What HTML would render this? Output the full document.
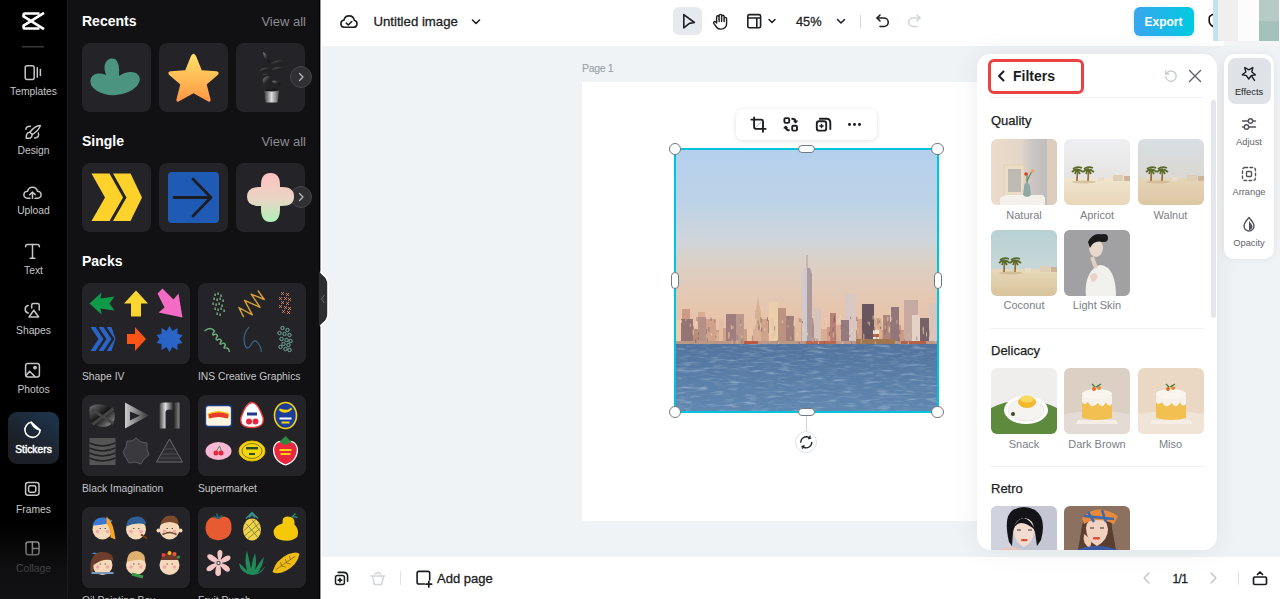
<!DOCTYPE html>
<html><head><meta charset="utf-8">
<style>
*{box-sizing:border-box;margin:0;padding:0}
html,body{width:1280px;height:599px;overflow:hidden;font-family:"Liberation Sans",sans-serif;background:#eff2f5;position:relative}
.abs{position:absolute}
.t{position:absolute;white-space:nowrap}
.card{position:absolute;width:69px;height:69px;background:#242428;border-radius:8px}
.pk{position:absolute;width:108px;height:81px;background:#242428;border-radius:8px}
.ft{position:absolute;width:66px;height:66px;border-radius:6px;overflow:hidden}
.ft svg{display:block}
.arr{position:absolute;width:22px;height:22px;border-radius:50%;background:#2f2f34;border:1px solid #45454a}
</style></head><body>
<div class="abs" style="left:0;top:0;width:67px;height:599px;background:#000"></div>
<svg class="abs" style="left:0;top:0" width="67" height="50" viewBox="0 0 67 50"><g fill="none" stroke="#fff" stroke-width="2.7" stroke-linejoin="round" stroke-linecap="butt">
<path d="M44 12.9 L23.6 25.6 V27 Q23.6 28.5 25.1 28.5 H39.5"/>
<path d="M44 29.1 L23.6 16.4 V15 Q23.6 13.5 25.1 13.5 H39.5"/>
</g><rect x="22" y="46" width="22" height="1.5" fill="#3a3a3c"/></svg>
<div class="t" style="left:0.0px;width:67px;text-align:center;top:87px;font-size:10.3px;line-height:10.3px;color:#c6c6ca;font-weight:normal;">Templates</div>
<div class="t" style="left:0.0px;width:67px;text-align:center;top:146px;font-size:10.3px;line-height:10.3px;color:#c6c6ca;font-weight:normal;">Design</div>
<div class="t" style="left:0.0px;width:67px;text-align:center;top:206px;font-size:10.3px;line-height:10.3px;color:#c6c6ca;font-weight:normal;">Upload</div>
<div class="t" style="left:0.0px;width:67px;text-align:center;top:266px;font-size:10.3px;line-height:10.3px;color:#c6c6ca;font-weight:normal;">Text</div>
<div class="t" style="left:0.0px;width:67px;text-align:center;top:326px;font-size:10.3px;line-height:10.3px;color:#c6c6ca;font-weight:normal;">Shapes</div>
<div class="t" style="left:0.0px;width:67px;text-align:center;top:385px;font-size:10.3px;line-height:10.3px;color:#c6c6ca;font-weight:normal;">Photos</div>
<div class="abs" style="left:8px;top:412px;width:51px;height:52px;border-radius:9px;background:linear-gradient(35deg,#1c1f25 30%,#1d3650 100%)"></div>
<div class="t" style="left:0.0px;width:67px;text-align:center;top:445px;font-size:10.3px;line-height:10.3px;color:#fff;font-weight:normal;-webkit-text-stroke:0.45px #fff">Stickers</div>
<div class="t" style="left:0.0px;width:67px;text-align:center;top:505px;font-size:10.3px;line-height:10.3px;color:#c6c6ca;font-weight:normal;">Frames</div>
<div class="t" style="left:0.0px;width:67px;text-align:center;top:564px;font-size:10.3px;line-height:10.3px;color:#c6c6ca;font-weight:normal;">Collage</div>
<svg class="abs" style="left:0;top:0" width="67" height="599" viewBox="0 0 67 599" fill="none" stroke="#c6c6ca" stroke-width="1.5" stroke-linecap="round" stroke-linejoin="round">
<rect x="25.2" y="65.7" width="9" height="13.8" rx="2"/><path d="M37.3 67.8v9.5M40.4 69.5v6"/>
<path d="M40.3 125.6 Q34.5 126 30 132.3 L32.2 134.6 Q39 130.2 40.3 125.6Z"/><path d="M30 132.3 Q27.5 132.2 26.6 134.5 Q26.2 136.6 26.3 138.2 Q28.5 138.6 30.3 138 Q32.2 137 32.2 134.6"/><path d="M25.9 129.3 Q25.6 126.5 30.5 126.2"/><path d="M38.3 133 Q39.8 137.6 34.6 138"/>
<path d="M30 198.2 H27.2 A3.5 3.5 0 0 1 27.6 191.2 A5 5 0 0 1 37.4 191.2 A3.5 3.5 0 0 1 37.8 198.2 H35"/><path d="M32.5 198.3v-6M29.7 194.8l2.8-2.8 2.8 2.8"/>
<path d="M25.6 246.8 Q25.6 244.6 27.6 244.6 H37.4 Q39.4 244.6 39.4 246.8"/><path d="M32.5 244.6V258.3M30.2 258.3h4.6"/>
<path d="M28.2 305.4 A3.9 3.9 0 0 0 28.2 313"/><path d="M31.7 308 V305 Q31.7 303.4 33.3 303.4 H37.6 Q39.2 303.4 39.2 305 V310"/><path d="M33.8 310.2 L38.6 317 H29 Z"/>
<rect x="25.6" y="363.6" width="13.8" height="13.4" rx="2.2"/><circle cx="35" cy="367.6" r="1.2" fill="#c6c6ca"/><path d="M26.3 375.3 L29.6 371.2 L35 376.6"/>
<g stroke="#fff" stroke-width="1.6"><path d="M31.3 422.3 A7.6 7.6 0 1 0 40.1 430.2"/><path d="M31.3 422.3 Q33 428 40.1 430.2 Z"/></g>
<rect x="25.6" y="482.6" width="13.4" height="12.6" rx="2.4"/><rect x="28.6" y="485.8" width="7.2" height="6.4" rx="1.6"/>
<g><rect x="26" y="542" width="13" height="12.8" rx="2.2"/><path d="M32.4 542v12.8M32.4 548.4h6.6"/></g>
</svg>
<div class="abs" style="left:0;top:520px;width:67px;height:79px;background:linear-gradient(rgba(19,19,21,0) 0px,rgba(19,19,21,.4) 28px,rgba(19,19,21,.75) 47px,rgba(19,19,21,.96) 79px)"></div>
<div class="abs" style="left:67px;top:0;width:253px;height:599px;background:#111113"></div>
<div class="abs" style="left:67px;top:0;width:1px;height:599px;background:#1c1c1f"></div>
<div class="t" style="left:82px;top:14px;font-size:14px;line-height:14px;color:#fff;font-weight:bold;">Recents</div>
<div class="t" style="right:974px;top:15px;font-size:13px;line-height:13px;color:#8c8c91;font-weight:normal;">View all</div>
<div class="t" style="left:82px;top:134px;font-size:14px;line-height:14px;color:#fff;font-weight:bold;">Single</div>
<div class="t" style="right:974px;top:135px;font-size:13px;line-height:13px;color:#8c8c91;font-weight:normal;">View all</div>
<div class="t" style="left:82px;top:254px;font-size:14px;line-height:14px;color:#fff;font-weight:bold;">Packs</div>
<div class="card" style="left:82px;top:43px"></div>
<div class="card" style="left:159px;top:43px"></div>
<div class="card" style="left:236px;top:43px"></div>
<div class="card" style="left:82px;top:163px"></div>
<div class="card" style="left:159px;top:163px"></div>
<div class="card" style="left:236px;top:163px"></div>
<svg class="abs" style="left:82px;top:43px" width="69" height="69" viewBox="0 0 69 69">
<path d="M15 48 Q6 42 9 35 Q13 28 24 32 Q21 24 24 19 Q27 14 33 16 Q38 19 37 33 Q46 27 54 30 Q61 35 55 43 Q47 51 34 52 Q24 53 15 48Z" fill="#4a9480"/></svg>
<svg class="abs" style="left:159px;top:43px" width="69" height="69" viewBox="0 0 69 69"><defs><linearGradient id="sg" x1="0" y1="0" x2="0" y2="1"><stop offset="0" stop-color="#ffe36a"/><stop offset="1" stop-color="#ff9644"/></linearGradient></defs>
<g transform="translate(34.5,36) scale(1.1) translate(-34.5,-33)"><path d="M34.5 10 Q36 10 37 12.5 L42 25 L55.5 26 Q58 26.5 57 29 L46.5 38 L50 51.5 Q50.5 54.5 48 53.5 L34.5 46 L21 53.5 Q18.5 54.5 19 51.5 L22.5 38 L12 29 Q11 26.5 13.5 26 L27 25 L32 12.5 Q33 10 34.5 10Z" fill="url(#sg)"/></g></svg>
<svg class="abs" style="left:236px;top:43px" width="69" height="69" viewBox="0 0 69 69"><defs><linearGradient id="pg" x1="0" y1="0" x2="1" y2="0"><stop offset="0" stop-color="#333"/><stop offset=".5" stop-color="#ddd"/><stop offset="1" stop-color="#555"/></linearGradient></defs>
<path d="M29.5 59.5 L28 47 L43 47 L41.5 59.5Z" fill="url(#pg)"/><ellipse cx="35.5" cy="47" rx="7.5" ry="1.5" fill="#1a1a1a"/>
<path d="M34.5 47 V20" stroke="#222" stroke-width="1.3"/>
<defs><linearGradient id="lf" x1="0" y1="0" x2="1" y2="1"><stop offset="0" stop-color="#8a8a8a"/><stop offset=".5" stop-color="#2a2a2a"/><stop offset="1" stop-color="#0e0e0e"/></linearGradient></defs><g fill="url(#lf)"><path d="M27 9 Q33 12 34 20 Q28 18 27 9Z"/><path d="M34 21.5 Q40 16 47 17.5 Q42 23 34 21.5Z"/><path d="M22.5 28 Q28 23 34.5 25.5 Q29 30 22.5 28Z"/><path d="M35.5 26.5 Q41 23 47.5 24.5 Q42 29 35.5 26.5Z"/><path d="M27 36 Q31 31 35 34 Q35.5 40 29 43 Q26 40 27 36Z"/><path d="M36 38 Q41 36 45 42 Q40 44 36 38Z"/><path d="M26 32 Q30 30 34 31 Q30 34 26 32Z"/><path d="M24.5 46 Q26 42 28 41 Q27 45 24.5 46Z"/></g></svg>
<div class="arr" style="left:289.5px;top:66px"></div>
<svg class="abs" style="left:295px;top:71px" width="12" height="12" viewBox="0 0 12 12"><path d="M4.5 2.5 L8 6 L4.5 9.5" fill="none" stroke="#b9b9be" stroke-width="1.3" stroke-linecap="round" stroke-linejoin="round"/></svg>
<div class="arr" style="left:289.5px;top:186px"></div>
<svg class="abs" style="left:295px;top:191px" width="12" height="12" viewBox="0 0 12 12"><path d="M4.5 2.5 L8 6 L4.5 9.5" fill="none" stroke="#b9b9be" stroke-width="1.3" stroke-linecap="round" stroke-linejoin="round"/></svg>
<svg class="abs" style="left:82px;top:163px" width="69" height="69" viewBox="0 0 69 69">
<path d="M9.5 10.5 H27.5 L41 34.5 L27.5 58 H9.5 L23 34.5Z" fill="#fdd22b"/><path d="M31 10.5 H48.5 L60 34.5 L48.5 58 H31 L44.5 34.5Z" fill="#fdd22b"/></svg>
<svg class="abs" style="left:159px;top:163px" width="69" height="69" viewBox="0 0 69 69">
<rect x="9" y="9" width="51" height="51" rx="4" fill="#1f5bb5"/><path d="M15 34.5 H51.5 M34 16 L52 34.5 L34 53" fill="none" stroke="#1a1d24" stroke-width="2.8" stroke-linecap="round" stroke-linejoin="round"/></svg>
<svg class="abs" style="left:236px;top:163px" width="69" height="69" viewBox="0 0 69 69"><defs><linearGradient id="fg" x1="0" y1="0" x2="0" y2="1"><stop offset="0" stop-color="#ffc1c1"/><stop offset=".55" stop-color="#e8d6c4"/><stop offset="1" stop-color="#b0f0b8"/></linearGradient></defs>
<path d="M25 22 Q25 10 34.5 10 Q44 10 44 22 L44 24 L46 24 Q58 24 58 33.5 Q58 43 46 43 L44 43 L44 46 Q44 59 34.5 59 Q25 59 25 46 L25 43 L23 43 Q11 43 11 33.5 Q11 24 23 24 L25 24Z" fill="url(#fg)"/></svg>
<div class="pk" style="left:82px;top:282.5px"></div>
<svg class="abs" style="left:82px;top:282.5px" width="108" height="81" viewBox="0 0 108 81"><g transform="translate(20.5,20.5)"><path d="M-13 0 L-1 -11 L-2 -5 L12 -7 L7 0 L12 7 L-2 5 L-1 11Z" fill="#0e9a48"/></g><g transform="translate(54,20.5)"><path d="M0 -13 L12 0 L5 0 L5 13 L-5 13 L-5 0 L-12 0Z" fill="#fcd630"/></g><g transform="translate(87.5,20.5)"><path d="M-12 -11 L-7 -16 L4 -5 L9 -11 L13 13 L-11 8 L-5 3Z" transform="translate(0,1)" fill="#f36bc4"/></g><g transform="translate(20.5,56)"><path d="M-12 -12 H-7 L1 0 L-7 12 H-12 L-4 0Z M-4 -12 H1 L9 0 L1 12 H-4 L4 0Z M4 -12 H9 L13 0 L9 12 H4 L12 0Z" fill="#2a64c7"/></g><g transform="translate(54,56)"><path d="M-9 -5 L-1 -5 L-1 -12 L10 0 L-1 12 L-1 5 L-9 5Z" fill="#fd5417"/></g><g transform="translate(87.5,56)"><path d="M0 -13 L3 -8 L8 -11 L8 -5 L13 -4 L10 0 L13 4 L8 5 L8 11 L3 8 L0 13 L-3 8 L-8 11 L-8 5 L-13 4 L-10 0 L-13 -4 L-8 -5 L-8 -11 L-3 -8Z" fill="#2a64c7"/></g></svg>
<div class="t" style="left:82px;top:372px;font-size:10.3px;line-height:10.3px;color:#c4c4c8;font-weight:normal;">Shape IV</div>
<div class="pk" style="left:198px;top:282.5px"></div>
<svg class="abs" style="left:198px;top:282.5px" width="108" height="81" viewBox="0 0 108 81"><g transform="translate(20.5,20.5)"><rect x="-4" y="-10" width="1.2" height="2.5" fill="#8fc29a"/><rect x="-1" y="-11" width="1.2" height="2.5" fill="#8fc29a"/><rect x="2" y="-9" width="1.2" height="2.5" fill="#8fc29a"/><rect x="-5" y="-6" width="1.2" height="2.5" fill="#8fc29a"/><rect x="-2" y="-5" width="1.2" height="2.5" fill="#8fc29a"/><rect x="1" y="-6" width="1.2" height="2.5" fill="#8fc29a"/><rect x="4" y="-4" width="1.2" height="2.5" fill="#8fc29a"/><rect x="-6" y="-1" width="1.2" height="2.5" fill="#8fc29a"/><rect x="-3" y="0" width="1.2" height="2.5" fill="#8fc29a"/><rect x="0" y="-1" width="1.2" height="2.5" fill="#8fc29a"/><rect x="3" y="1" width="1.2" height="2.5" fill="#8fc29a"/><rect x="-4" y="4" width="1.2" height="2.5" fill="#8fc29a"/><rect x="-1" y="5" width="1.2" height="2.5" fill="#8fc29a"/><rect x="2" y="4" width="1.2" height="2.5" fill="#8fc29a"/><rect x="5" y="6" width="1.2" height="2.5" fill="#8fc29a"/><rect x="-2" y="9" width="1.2" height="2.5" fill="#8fc29a"/><rect x="1" y="10" width="1.2" height="2.5" fill="#8fc29a"/></g><g transform="translate(54,20.5)"><path d="M-8.5 13.1 L-13.1 4 L0.3 11.3 L-7.4 -3.2 L8.1 3.8 L-0.8 -9.3 L12.3 -4 L6.2 -12.5" fill="none" stroke="#d9a033" stroke-width="1.4" stroke-linejoin="round" stroke-linecap="round"/></g><g transform="translate(87.5,20.5)"><path d="M-4.3 -11.3 l2.6 2.6 M-1.7 -11.3 l-2.6 2.6" stroke="#f08a6c" stroke-width="1"/><path d="M0.7 -10.3 l2.6 2.6 M3.3 -10.3 l-2.6 2.6" stroke="#f08a6c" stroke-width="1"/><path d="M-6.3 -6.3 l2.6 2.6 M-3.7 -6.3 l-2.6 2.6" stroke="#f08a6c" stroke-width="1"/><path d="M-1.3 -6.3 l2.6 2.6 M1.3 -6.3 l-2.6 2.6" stroke="#f08a6c" stroke-width="1"/><path d="M2.7 -5.3 l2.6 2.6 M5.3 -5.3 l-2.6 2.6" stroke="#f08a6c" stroke-width="1"/><path d="M-4.3 -2.3 l2.6 2.6 M-1.7 -2.3 l-2.6 2.6" stroke="#f08a6c" stroke-width="1"/><path d="M0.7 -1.3 l2.6 2.6 M3.3 -1.3 l-2.6 2.6" stroke="#f08a6c" stroke-width="1"/><path d="M-6.3 1.7 l2.6 2.6 M-3.7 1.7 l-2.6 2.6" stroke="#f08a6c" stroke-width="1"/><path d="M-1.3 2.7 l2.6 2.6 M1.3 2.7 l-2.6 2.6" stroke="#f08a6c" stroke-width="1"/><path d="M2.7 3.7 l2.6 2.6 M5.3 3.7 l-2.6 2.6" stroke="#f08a6c" stroke-width="1"/><path d="M-3.3 6.7 l2.6 2.6 M-0.7 6.7 l-2.6 2.6" stroke="#f08a6c" stroke-width="1"/><path d="M1.7 7.7 l2.6 2.6 M4.3 7.7 l-2.6 2.6" stroke="#f08a6c" stroke-width="1"/></g><g transform="translate(20.5,56)"><path d="M-14 -8 Q-8 -13 -4 -8 Q-7 -4 -5 -4 Q-2 -6 -1 -3 Q-4 1 -1 1 Q2 -1 3 2 Q0 6 3 5 Q6 3 7 6 Q4 10 7 9 Q10 8 11 13" fill="none" stroke="#6fb27a" stroke-width="1.3"/></g><g transform="translate(54,56)"><path d="M-3 -12 Q-10 -4 -7 6 Q-5 12 -1 6 Q2 -1 6 4 Q10 9 9 13" fill="none" stroke="#3d6b92" stroke-width="1.1"/></g><g transform="translate(87.5,56)"><circle cx="-3" cy="-11" r="1.7" fill="none" stroke="#79b8ae" stroke-width=".9"/><circle cx="2" cy="-9" r="1.7" fill="none" stroke="#79b8ae" stroke-width=".9"/><circle cx="-6" cy="-6" r="1.7" fill="none" stroke="#79b8ae" stroke-width=".9"/><circle cx="-1" cy="-5" r="1.7" fill="none" stroke="#79b8ae" stroke-width=".9"/><circle cx="4" cy="-4" r="1.7" fill="none" stroke="#79b8ae" stroke-width=".9"/><circle cx="-4" cy="0" r="1.7" fill="none" stroke="#79b8ae" stroke-width=".9"/><circle cx="1" cy="1" r="1.7" fill="none" stroke="#79b8ae" stroke-width=".9"/><circle cx="5" cy="2" r="1.7" fill="none" stroke="#79b8ae" stroke-width=".9"/><circle cx="-2" cy="5" r="1.7" fill="none" stroke="#79b8ae" stroke-width=".9"/><circle cx="3" cy="6" r="1.7" fill="none" stroke="#79b8ae" stroke-width=".9"/><circle cx="-5" cy="8" r="1.7" fill="none" stroke="#79b8ae" stroke-width=".9"/><circle cx="0" cy="10" r="1.7" fill="none" stroke="#79b8ae" stroke-width=".9"/><circle cx="4" cy="11" r="1.7" fill="none" stroke="#79b8ae" stroke-width=".9"/></g></svg>
<div class="t" style="left:198px;top:372px;font-size:10.3px;line-height:10.3px;color:#c4c4c8;font-weight:normal;">INS Creative Graphics</div>
<div class="pk" style="left:82px;top:394.5px"></div>
<svg class="abs" style="left:82px;top:394.5px" width="108" height="81" viewBox="0 0 108 81"><g transform="translate(20.5,20.5)"><defs><linearGradient id="b1" x1="0" y1="0" x2="1" y2="1"><stop offset="0" stop-color="#777"/><stop offset=".5" stop-color="#111"/><stop offset="1" stop-color="#aaa"/></linearGradient></defs><path d="M-13 -8 Q-6 -14 6 -9 Q14 -5 12 4 Q8 13 -3 11 Q-13 8 -13 -2Z" fill="url(#b1)"/><path d="M-11 -6 L11 8 M11 -7 L-10 9" stroke="#444" stroke-width="3"/></g><g transform="translate(54,20.5)"><defs><linearGradient id="b2" x1="0" y1="0" x2="1" y2="0"><stop offset="0" stop-color="#ccc"/><stop offset="1" stop-color="#333"/></linearGradient></defs><path d="M-11 -13 L13 0 L-11 13Z M-6 -4 L-6 5 L4 0Z" fill="url(#b2)" fill-rule="evenodd"/></g><g transform="translate(87.5,20.5)"><defs><linearGradient id="b3" x1="0" y1="0" x2="1" y2="0"><stop offset="0" stop-color="#444"/><stop offset=".3" stop-color="#ddd"/><stop offset=".7" stop-color="#222"/><stop offset="1" stop-color="#888"/></linearGradient></defs><path d="M-10 13 V-10 Q-10 -13 -6 -13 H10 V13 H4 V-3 Q4 -6 0 -6 Q-4 -6 -4 -3 V13Z" fill="url(#b3)"/></g><g transform="translate(20.5,56)"><rect x="-13" y="-13" width="26" height="27" fill="#555"/><path d="M-13 -8 Q0 -2 13 -8 M-13 -3 Q0 3 13 -3 M-13 2 Q0 8 13 2 M-13 7 Q0 13 13 7" stroke="#222" stroke-width="1.4" fill="none"/></g><g transform="translate(54,56)"><path d="M0 -13 L5 -9 L11 -8 L11 -2 L13 4 L8 8 L5 13 L-1 11 L-7 12 L-10 7 L-13 1 L-10 -4 L-9 -10 L-4 -10Z" fill="#3a3a3e" stroke="#5a5a5e" stroke-width="1"/></g><g transform="translate(87.5,56)"><path d="M0 -12 L13 11 L-13 11Z" fill="#2e2e32" stroke="#6a6a6e" stroke-width="1"/><path d="M-8 3 H8 M-5 -2 H5 M-10 7 H10" stroke="#555" stroke-width=".8"/></g></svg>
<div class="t" style="left:82px;top:484px;font-size:10.3px;line-height:10.3px;color:#c4c4c8;font-weight:normal;">Black Imagination</div>
<div class="pk" style="left:198px;top:394.5px"></div>
<svg class="abs" style="left:198px;top:394.5px" width="108" height="81" viewBox="0 0 108 81"><g transform="translate(20.5,20.5)"><rect x="-13" y="-10" width="26" height="21" rx="3" fill="#fff6e0" stroke="#1c3b8a" stroke-width="1.3"/><path d="M-11 -2 Q0 -7 11 -2 L10 3 Q0 -1 -10 3Z" fill="#f5c31c"/><path d="M-10 -1 Q0 -5 10 -1 L9 3 Q0 0 -9 3Z" fill="#e83a2a"/></g><g transform="translate(54,20.5)"><path d="M0 -13 Q6 -13 11 2 Q13 12 0 12 Q-13 12 -11 2 Q-6 -13 0 -13Z" fill="#fff" stroke="#e5383b" stroke-width="1.4"/><circle cx="-3" cy="6" r="3" fill="#e5283b"/><circle cx="3.5" cy="6" r="3" fill="#e5283b"/><rect x="-5" y="-3" width="10" height="3" fill="#1d3a8a"/></g><g transform="translate(87.5,20.5)"><ellipse cx="0" cy="0" rx="11" ry="13" fill="#1c3c9a" stroke="#f6d20c" stroke-width="1.6"/><path d="M-6 -6 Q0 -1 6 -7 Q3 -3 -6 -6Z" fill="#f6d20c" stroke="#f6d20c" stroke-width="2"/><rect x="-6" y="2" width="12" height="2" fill="#fff"/><rect x="-4" y="6" width="8" height="2" fill="#f6d20c"/></g><g transform="translate(20.5,56)"><ellipse cx="0" cy="0" rx="13" ry="9" fill="#f6b8d2"/><circle cx="-2.5" cy="2" r="2.5" fill="#e5283b"/><circle cx="2.5" cy="2" r="2.5" fill="#e5283b"/><path d="M-2 0 L1 -5 L3 0" stroke="#3a8a3a" fill="none" stroke-width=".8"/></g><g transform="translate(54,56)"><ellipse cx="0" cy="0" rx="13" ry="10" fill="#f6d60c" stroke="#e5b800" stroke-width="1"/><ellipse cx="0" cy="0" rx="10" ry="7.5" fill="none" stroke="#3a3a20" stroke-width=".6"/><rect x="-6" y="-4" width="12" height="2.4" fill="#2a4a2a"/><rect x="-3" y="2" width="6" height="2" fill="#2a4a2a"/></g><g transform="translate(87.5,56)"><path d="M0 -9 Q10 -12 12 -2 Q12 10 0 14 Q-12 10 -12 -2 Q-10 -12 0 -9Z" fill="#e8283e" stroke="#fff" stroke-width="1.2"/><path d="M-6 -9 L0 -6 L6 -9 L3 -12 L0 -15 L-3 -12Z" fill="#2c8a3a"/><rect x="-6" y="-2" width="12" height="2" fill="#f6d60c"/><rect x="-5" y="2" width="10" height="2" fill="#f6d60c"/></g></svg>
<div class="t" style="left:198px;top:484px;font-size:10.3px;line-height:10.3px;color:#c4c4c8;font-weight:normal;">Supermarket</div>
<div class="pk" style="left:82px;top:506.5px"></div>
<svg class="abs" style="left:82px;top:506.5px" width="108" height="81" viewBox="0 0 108 81"><g transform="translate(20.5,20.5)"><circle cx="0" cy="2" r="10" fill="#f6d9b8"/><path d="M-10 -2 Q-8 -11 2 -10 L10 -7 Q9 -3 -10 -2Z" fill="#3a78d4"/><path d="M4 -11 Q11 -6 13 12 L8 10 Q8 0 4 -4Z" fill="#f5a524"/><circle cx="-5" cy="4" r="1.8" fill="#f4a6b0"/><circle cx="5" cy="4" r="1.8" fill="#f4a6b0"/><path d="M-3 1 h1.5 M2 1 h1.5" stroke="#444" stroke-width=".8"/></g><g transform="translate(54,20.5)"><circle cx="0" cy="2" r="10" fill="#f6d9b8"/><path d="M-10 -1 Q-9 -12 3 -11 Q10 -9 10 -3 Q0 -6 -10 -1Z" fill="#2f5f96"/><path d="M5 7 L11 11" stroke="#7a3a1a" stroke-width="2"/><circle cx="-5" cy="4" r="1.8" fill="#f4a6b0"/><circle cx="5" cy="4" r="1.8" fill="#f4a6b0"/><path d="M-3 1 h1.5 M2 1 h1.5" stroke="#444" stroke-width=".8"/></g><g transform="translate(87.5,20.5)"><circle cx="0" cy="2" r="10" fill="#f6d9b8"/><path d="M-9 -3 Q-7 -12 1 -12 Q9 -12 9 -3 Q0 -8 -9 -3Z" fill="#7a4a2a"/><path d="M-7 7 Q0 3 7 7" stroke="#6a4a2a" stroke-width="1.5" fill="none"/><circle cx="-11" cy="3" r="2" fill="#f6d9b8"/><circle cx="11" cy="3" r="2" fill="#f6d9b8"/><circle cx="-5" cy="4" r="1.8" fill="#f4a6b0"/><circle cx="5" cy="4" r="1.8" fill="#f4a6b0"/><path d="M-3 1 h1.5 M2 1 h1.5" stroke="#444" stroke-width=".8"/></g><g transform="translate(20.5,56)"><circle cx="0" cy="2" r="10" fill="#f6d9b8"/><path d="M-12 9 Q-13 -12 0 -11 Q11 -11 11 -2 Q2 -6 -9 2 L-9 9Z" fill="#6b3d2a"/><path d="M-11 -9 Q-8 -12 -5 -9" fill="#4a8ad0"/><path d="M-11 10 L11 10" stroke="#7a9ac0" stroke-width="2"/><circle cx="-5" cy="4" r="1.8" fill="#f4a6b0"/><circle cx="5" cy="4" r="1.8" fill="#f4a6b0"/><path d="M-3 1 h1.5 M2 1 h1.5" stroke="#444" stroke-width=".8"/></g><g transform="translate(54,56)"><circle cx="0" cy="2" r="10" fill="#f6d9b8"/><path d="M-9 -1 Q-9 -12 1 -12 Q10 -11 9 0 Q8 -6 -9 -1Z" fill="#e0b070"/><path d="M-4 11 L7 14" stroke="#3a9a4a" stroke-width="3"/><circle cx="-5" cy="4" r="1.8" fill="#f4a6b0"/><circle cx="5" cy="4" r="1.8" fill="#f4a6b0"/><path d="M-3 1 h1.5 M2 1 h1.5" stroke="#444" stroke-width=".8"/></g><g transform="translate(87.5,56)"><circle cx="0" cy="2" r="10" fill="#f6d9b8"/><path d="M-9 -3 Q-7 -10 0 -10 Q8 -10 9 -3Z" fill="#6a3a2a"/><circle cx="-6" cy="-8" r="2" fill="#e8403a"/><circle cx="0" cy="-10" r="2" fill="#f5b82a"/><circle cx="5" cy="-9" r="2" fill="#e85a3a"/><circle cx="9" cy="-6" r="1.5" fill="#3a9a4a"/><circle cx="-5" cy="4" r="1.8" fill="#f4a6b0"/><circle cx="5" cy="4" r="1.8" fill="#f4a6b0"/><path d="M-3 1 h1.5 M2 1 h1.5" stroke="#444" stroke-width=".8"/></g></svg>
<div class="t" style="left:82px;top:596px;font-size:10.3px;line-height:10.3px;color:#c4c4c8;font-weight:normal;">Oil Painting Boy</div>
<div class="pk" style="left:198px;top:506.5px"></div>
<svg class="abs" style="left:198px;top:506.5px" width="108" height="81" viewBox="0 0 108 81"><g transform="translate(20.5,20.5)"><path d="M0 -9 Q-8 -13 -12 -5 Q-15 4 -9 10 Q-3 14 4 12 Q12 10 13 2 Q14 -10 6 -11 Q3 -11 0 -9Z" fill="#e85a32"/><path d="M0 -9 L-2 -14 M0 -9 L-5 -11 M0 -9 L4 -12" stroke="#2a6a6a" stroke-width="1.6"/></g><g transform="translate(54,20.5)"><ellipse cx="0" cy="2" rx="9" ry="11" fill="#f2d24a"/><path d="M-6 -4 L6 10 M-8 3 L4 -8 M-7 8 L7 -4 M0 -8 L8 4 M-4 11 L8 1" stroke="#6a7a3a" stroke-width=".8"/><path d="M-6 -9 L0 -15 L6 -9 M-3 -10 L0 -13 L3 -10" stroke="#3a8a8a" stroke-width="1.5" fill="none"/></g><g transform="translate(87.5,20.5)"><path d="M2 -11 Q10 -11 9 -3 Q14 2 12 9 Q8 14 -2 13 Q-12 12 -12 4 Q-11 -2 -3 -4 Q-4 -11 2 -11Z" fill="#f5c80a"/><path d="M6 -10 L10 -14 M7 -11 L12 -10" stroke="#2a8a6a" stroke-width="1.5"/></g><g transform="translate(20.5,56)"><path d="M0 -3 Q-3 -14 2 -13 Q6 -12 2 -3 Q10 -10 12 -6 Q13 -2 3 0 Q13 3 11 8 Q8 11 2 3 Q4 14 -1 13 Q-5 12 -2 3 Q-9 11 -12 7 Q-13 3 -3 0 Q-13 -4 -11 -8 Q-8 -11 0 -3Z" fill="#f4c6c6"/><circle cx="0" cy="0" r="2.2" fill="#555"/><circle cx="0" cy="0" r="1" fill="#fff"/></g><g transform="translate(54,56)"><path d="M0 12 Q-12 10 -13 0 Q-8 4 -5 8 Q-8 -4 -5 -12 Q-2 0 -1 6 Q1 -5 3 -10 Q5 0 3 7 Q8 -2 12 -6 Q10 6 5 10 Q9 9 13 3 Q11 11 0 12Z" fill="#1f8a5a"/></g><g transform="translate(87.5,56)"><path d="M-13 9 Q-10 -3 3 -9 Q12 -12 14 -9 Q12 2 0 8 Q-8 12 -13 9Z" fill="#f0bc12"/><path d="M-10 7 L10 -7 M-4 3 l-1 -4 M1 0 l-1 -4 M5 -3 l-1 -4 M-4 3 l4 1 M1 0 l4 1" stroke="#7a5a10" stroke-width=".7"/></g></svg>
<div class="t" style="left:198px;top:596px;font-size:10.3px;line-height:10.3px;color:#c4c4c8;font-weight:normal;">Fruit Punch</div>
<div class="abs" style="left:320px;top:0;width:960px;height:46px;background:#fff"></div>
<svg class="abs" style="left:338px;top:10px" width="22" height="22" viewBox="0 0 22 22" fill="none" stroke="#1d1f24" stroke-width="1.6" stroke-linecap="round" stroke-linejoin="round">
<path d="M6 17.3 H15.5 A3.6 3.6 0 0 0 16.2 10.2 A5.2 5.2 0 0 0 6 10 A3.7 3.7 0 0 0 6 17.3Z"/><path d="M8.3 13.2 L10.3 15 L13.8 11.5"/></svg>
<div class="t" style="left:373.5px;top:15px;font-size:13.2px;line-height:13.2px;color:#1d1f24;font-weight:normal;-webkit-text-stroke:0.3px #1d1f24">Untitled image</div>
<svg class="abs" style="left:470px;top:15.6px" width="12" height="12" viewBox="0 0 12 12"><path d="M2.5 4 L6 7.5 L9.5 4" fill="none" stroke="#1d1f24" stroke-width="1.6" stroke-linecap="round" stroke-linejoin="round"/></svg>
<div class="abs" style="left:673px;top:7px;width:29px;height:28px;border-radius:6px;background:#e6e9ed"></div>
<svg class="abs" style="left:677px;top:10px" width="22" height="22" viewBox="0 0 22 22" fill="none" stroke="#1d1f24" stroke-width="1.6" stroke-linejoin="round">
<path d="M6.8 4.6 L17.4 12.5 L12.4 13.4 L6.8 17.8 Z"/></svg>
<svg class="abs" style="left:708.5px;top:10.5px" width="21" height="21" viewBox="0 0 22 22" fill="none" stroke="#1d1f24" stroke-width="1.5" stroke-linecap="round" stroke-linejoin="round">
<path d="M8 12 V6.2 a1.3 1.3 0 0 1 2.6 0 V11 M10.6 11 V4.8 a1.3 1.3 0 0 1 2.6 0 V11 M13.2 11 V5.8 a1.3 1.3 0 0 1 2.6 0 V11 M15.8 11 V8 a1.3 1.3 0 0 1 2.6 0 V13.5 a5.5 5.5 0 0 1 -5.5 5.5 H12 a5 5 0 0 1 -4 -2 L5 13 a1.3 1.3 0 0 1 2 -1.6 L8 12.5"/></svg>
<svg class="abs" style="left:743px;top:10px" width="22" height="22" viewBox="0 0 22 22" fill="none" stroke="#1d1f24" stroke-width="1.6" stroke-linejoin="round">
<rect x="4.8" y="4.6" width="12.8" height="13.2" rx="1.6"/><path d="M4.8 8 H17.6 M13.8 8 V17.8"/></svg>
<svg class="abs" style="left:766px;top:15px" width="12" height="12" viewBox="0 0 12 12"><path d="M3 4.5 L6 7.5 L9 4.5" fill="none" stroke="#1d1f24" stroke-width="1.5" stroke-linecap="round" stroke-linejoin="round"/></svg>
<div class="t" style="left:796px;top:16px;font-size:12.8px;line-height:12.8px;color:#1d1f24;font-weight:normal;-webkit-text-stroke:0.3px #1d1f24">45%</div>
<svg class="abs" style="left:835px;top:15px" width="12" height="12" viewBox="0 0 12 12"><path d="M2.5 4.5 L6 8 L9.5 4.5" fill="none" stroke="#1d1f24" stroke-width="1.5" stroke-linecap="round" stroke-linejoin="round"/></svg>
<div class="abs" style="left:860px;top:14.5px;width:1px;height:13.5px;background:#d5d9de"></div>
<svg class="abs" style="left:871px;top:10px" width="22" height="22" viewBox="0 0 22 22" fill="none" stroke="#1d1f24" stroke-width="1.6" stroke-linecap="round" stroke-linejoin="round">
<path d="M9 5 L6 8 L9 11"/><path d="M6.3 8 H13 a4 4 0 0 1 0 8.5 H9"/></svg>
<svg class="abs" style="left:904px;top:10px" width="22" height="22" viewBox="0 0 22 22" fill="none" stroke="#cfd4da" stroke-width="1.6" stroke-linecap="round" stroke-linejoin="round">
<path d="M13 5 L16 8 L13 11"/><path d="M15.7 8 H9 a4 4 0 0 0 0 8.5 H13"/></svg>
<div class="abs" style="left:1134px;top:7px;width:60px;height:28.5px;border-radius:6px;background:linear-gradient(90deg,#3aa6f0,#00cadf);box-shadow:0 1px 4px rgba(0,180,230,.18)"></div>
<div class="t" style="left:1144.5px;top:16px;font-size:12px;line-height:12px;color:#fff;font-weight:bold;">Export</div>
<svg class="abs" style="left:1203px;top:10px" width="22" height="24" viewBox="0 0 22 24" fill="none" stroke="#111" stroke-width="1.6" stroke-linejoin="round">
<path d="M11 4 Q8 4.8 6.6 6.6 Q6.2 7.2 6.2 9 V11 Q6.2 14.5 10.5 16.8"/></svg>
<div class="abs" style="left:1213px;top:0;width:5px;height:41px;background:#c3e2ee"></div>
<div class="abs" style="left:1218px;top:0;width:20px;height:41px;background:#efefef"></div>
<div class="abs" style="left:1238px;top:0;width:21px;height:41px;background:#fcfcfc"></div>
<div class="abs" style="left:1259px;top:0;width:20px;height:21px;background:#b6cbc6"></div>
<div class="abs" style="left:1259px;top:21px;width:20px;height:20px;background:#a4c2bb"></div>
<div class="abs" style="left:1279px;top:0;width:1px;height:41px;background:#fff"></div>
<div class="abs" style="left:1224px;top:41px;width:56px;height:11px;background:#f3f4f6"></div>
<div class="abs" style="left:321px;top:46px;width:959px;height:511px;background:#f0f3f6"></div>
<div class="t" style="left:582px;top:63px;font-size:10.5px;line-height:10.5px;color:#9aa2ac;font-weight:normal;letter-spacing:-0.35px;-webkit-text-stroke:0.15px #9aa2ac">Page 1</div>
<div class="abs" style="left:582px;top:82px;width:420px;height:439px;background:#fff"></div>
<svg class="abs" style="left:676px;top:150px" width="261" height="261" viewBox="0 0 261 261"><defs>
<linearGradient id="sky" x1="0" y1="0" x2="0" y2="1"><stop offset="0" stop-color="#b4d0ee"/><stop offset=".2" stop-color="#bdd2e6"/><stop offset=".34" stop-color="#cfd6dc"/><stop offset=".44" stop-color="#dccfc4"/><stop offset=".6" stop-color="#e6c6ae"/><stop offset=".75" stop-color="#e8bfa3"/></linearGradient>
<linearGradient id="sea" x1="0" y1="0" x2="0" y2="1"><stop offset="0" stop-color="#52739d"/><stop offset=".5" stop-color="#597ea8"/><stop offset="1" stop-color="#6087b1"/></linearGradient>
<filter id="wv" x="0" y="0" width="100%" height="100%"><feTurbulence type="fractalNoise" baseFrequency="0.06 0.35" numOctaves="2" seed="4" result="n"/><feColorMatrix in="n" values="0 0 0 0 0.62  0 0 0 0 0.74  0 0 0 0 0.86  0 0 0 1.3 -0.72"/><feComposite in2="SourceGraphic" operator="in"/></filter><filter id="wd" x="0" y="0" width="100%" height="100%"><feTurbulence type="fractalNoise" baseFrequency="0.08 0.45" numOctaves="2" seed="9" result="n"/><feColorMatrix in="n" values="0 0 0 0 0.2  0 0 0 0 0.3  0 0 0 0 0.45  0 0 0 1.6 -0.8"/><feComposite in2="SourceGraphic" operator="in"/></filter>
</defs>
<rect width="261" height="261" fill="url(#sky)"/>
<g opacity=".92"><rect x="0" y="180" width="261" height="14" fill="#c49888"/><rect x="0" y="170" width="6" height="24" fill="#f0d0b0"/><rect x="5" y="175" width="6" height="19" fill="#e2bca0"/><rect x="11" y="176" width="7" height="18" fill="#b98878"/><rect x="18" y="179" width="6" height="15" fill="#b98878"/><rect x="24" y="171" width="7" height="23" fill="#d9ab90"/><rect x="30" y="173" width="6" height="21" fill="#b98878"/><rect x="36" y="182" width="7" height="12" fill="#d9ab90"/><rect x="43" y="169" width="4" height="25" fill="#e2bca0"/><rect x="47" y="178" width="6" height="16" fill="#cfa08a"/><rect x="53" y="180" width="7" height="14" fill="#a88078"/><rect x="59" y="173" width="3" height="21" fill="#c99882"/><rect x="61" y="179" width="8" height="15" fill="#9a787a"/><rect x="69" y="179" width="8" height="15" fill="#e9c6a8"/><rect x="77" y="179" width="7" height="15" fill="#d9ab90"/><rect x="84" y="171" width="7" height="23" fill="#c99882"/><rect x="90" y="170" width="3" height="24" fill="#a88078"/><rect x="92" y="183" width="3" height="11" fill="#d9ab90"/><rect x="95" y="169" width="4" height="25" fill="#d9ab90"/><rect x="98" y="172" width="6" height="22" fill="#9a787a"/><rect x="103" y="174" width="3" height="20" fill="#e2bca0"/><rect x="105" y="182" width="5" height="12" fill="#a88078"/><rect x="109" y="177" width="3" height="17" fill="#c99882"/><rect x="112" y="172" width="4" height="22" fill="#c99882"/><rect x="116" y="176" width="3" height="18" fill="#cfa08a"/><rect x="119" y="175" width="8" height="19" fill="#e2bca0"/><rect x="126" y="180" width="7" height="14" fill="#b98878"/><rect x="132" y="177" width="8" height="17" fill="#c99882"/><rect x="139" y="180" width="6" height="14" fill="#d9ab90"/><rect x="144" y="179" width="7" height="15" fill="#d9ab90"/><rect x="151" y="177" width="4" height="17" fill="#c99882"/><rect x="155" y="180" width="4" height="14" fill="#cfa08a"/><rect x="158" y="171" width="3" height="23" fill="#e9c6a8"/><rect x="160" y="182" width="6" height="12" fill="#c99882"/><rect x="166" y="174" width="4" height="20" fill="#e2bca0"/><rect x="170" y="178" width="7" height="16" fill="#e9c6a8"/><rect x="176" y="174" width="4" height="20" fill="#cfa08a"/><rect x="180" y="181" width="6" height="13" fill="#b98878"/><rect x="185" y="170" width="4" height="24" fill="#e2bca0"/><rect x="189" y="172" width="4" height="22" fill="#f0d0b0"/><rect x="193" y="177" width="8" height="17" fill="#cfa08a"/><rect x="201" y="183" width="6" height="11" fill="#c99882"/><rect x="207" y="175" width="3" height="19" fill="#a88078"/><rect x="210" y="172" width="8" height="22" fill="#9a787a"/><rect x="217" y="170" width="6" height="24" fill="#cfa08a"/><rect x="222" y="181" width="7" height="13" fill="#c99882"/><rect x="229" y="176" width="4" height="18" fill="#f0d0b0"/><rect x="233" y="180" width="5" height="14" fill="#e2bca0"/><rect x="238" y="179" width="3" height="15" fill="#9a787a"/><rect x="240" y="183" width="4" height="11" fill="#d9ab90"/><rect x="244" y="178" width="5" height="16" fill="#f0d0b0"/><rect x="249" y="178" width="3" height="16" fill="#b98878"/><rect x="251" y="173" width="5" height="21" fill="#f0d0b0"/><rect x="256" y="183" width="7" height="11" fill="#d9ab90"/><rect x="6" y="159" width="8" height="35" fill="#c99882"/><rect x="22" y="162" width="7" height="32" fill="#d9ab90"/><rect x="30" y="169" width="10" height="25" fill="#cfa08a"/><rect x="50" y="164" width="10" height="30" fill="#9a787a"/><rect x="63" y="179" width="8" height="15" fill="#c99882"/><rect x="83" y="169" width="9" height="25" fill="#cfa08a"/><rect x="95" y="162" width="7" height="32" fill="#f0d0b0"/><rect x="102" y="160" width="6" height="34" fill="#d9ab90"/><rect x="109" y="176" width="9" height="18" fill="#cfa08a"/><rect x="120" y="168" width="4" height="26" fill="#e2bca0"/><rect x="125" y="169" width="10" height="25" fill="#cfa08a"/><rect x="138" y="169" width="5" height="25" fill="#a88078"/><rect x="154" y="167" width="5" height="27" fill="#e9c6a8"/><rect x="160" y="175" width="5" height="19" fill="#d9ab90"/><rect x="165" y="174" width="6" height="20" fill="#cfa08a"/><rect x="173" y="166" width="5" height="28" fill="#f0d0b0"/><rect x="181" y="169" width="9" height="25" fill="#cfa08a"/><rect x="192" y="178" width="4" height="16" fill="#d9ab90"/><rect x="198" y="168" width="8" height="26" fill="#d9ab90"/><rect x="207" y="165" width="7" height="29" fill="#a88078"/><rect x="215" y="175" width="10" height="19" fill="#c99882"/><rect x="228" y="159" width="4" height="35" fill="#e9c6a8"/><rect x="232" y="173" width="9" height="21" fill="#cfa08a"/><rect x="243" y="179" width="5" height="15" fill="#f0d0b0"/><rect x="248" y="172" width="5" height="22" fill="#e9c6a8"/><rect x="254" y="172" width="7" height="22" fill="#9a787a"/><rect x="5" y="169" width="12" height="25" fill="#8e6e70"/><rect x="22" y="167" width="8" height="27" fill="#b08c84"/><rect x="60" y="164" width="8" height="30" fill="#b8958a"/><rect x="93" y="152" width="9" height="42" fill="#ecd0ac"/><rect x="102" y="158" width="8" height="36" fill="#b9907e"/><rect x="110" y="166" width="8" height="28" fill="#9c7a78"/><rect x="137" y="158" width="8" height="36" fill="#d5c4be"/><rect x="154" y="163" width="6" height="31" fill="#b27a74"/><rect x="169" y="143" width="11" height="51" fill="#d7c8c4"/><rect x="186" y="154" width="12" height="40" fill="#5e4c58"/><rect x="215" y="157" width="8" height="37" fill="#8a7078"/><rect x="228" y="150" width="14" height="44" fill="#c4a8a0"/><rect x="236" y="165" width="8" height="29" fill="#e4d4ca"/><rect x="244" y="168" width="9" height="26" fill="#6e5a62"/><rect x="253" y="153" width="8" height="41" fill="#d8c4bc"/><rect x="165" y="170" width="8" height="24" fill="#8e747c"/><rect x="130" y="168" width="8" height="26" fill="#a88a8a"/><path d="M126 124 L128 118 L134 118 L136 124 L136 194 L126 194Z" fill="#cfcad0"/><path d="M131 105 L131 118" stroke="#a89a94" stroke-width="1"/><path d="M131 118 L134 118 L136 124 L136 194 L131 194Z" fill="#a8969c"/><path d="M79 162 L81 154 L82 146 L83 154 L85 162 L85 194 L79 194Z" fill="#d6b094"/><rect x="0" y="191" width="261" height="3" fill="#b89484"/><rect x="180" y="189" width="39" height="7" fill="#9a7048"/><rect x="197" y="180" width="6" height="9" fill="#eee6dc"/><rect x="197" y="184" width="6" height="3" fill="#b05a40"/><rect x="68" y="191" width="14" height="3" fill="#b8503a"/><rect x="130" y="191" width="30" height="3" fill="#b86048"/><rect x="225" y="191" width="25" height="3" fill="#b05a40"/><rect x="117.6" y="170.3" width="1" height="5.5" fill="#f4d8b8" opacity=".7"/><rect x="98.3" y="180.4" width="1" height="5.5" fill="#e8b890" opacity=".7"/><rect x="121.0" y="182.6" width="1" height="2.8" fill="#f4d8b8" opacity=".7"/><rect x="55.7" y="189.3" width="1" height="5.9" fill="#e8b890" opacity=".7"/><rect x="140.1" y="186.4" width="1" height="3.3" fill="#f4d8b8" opacity=".7"/><rect x="91.0" y="167.2" width="1" height="3.8" fill="#6e5858" opacity=".7"/><rect x="200.5" y="178.2" width="1" height="2.1" fill="#f4d8b8" opacity=".7"/><rect x="112.0" y="165.9" width="1" height="4.1" fill="#8a6a6a" opacity=".7"/><rect x="122.8" y="192.0" width="1" height="5.6" fill="#6e5858" opacity=".7"/><rect x="246.8" y="178.3" width="1" height="5.8" fill="#f4d8b8" opacity=".7"/><rect x="197.8" y="176.9" width="1" height="4.2" fill="#8a6a6a" opacity=".7"/><rect x="136.4" y="187.8" width="1" height="4.2" fill="#e8b890" opacity=".7"/><rect x="175.2" y="190.8" width="1" height="5.5" fill="#8a6a6a" opacity=".7"/><rect x="79.5" y="168.8" width="1" height="4.2" fill="#e8b890" opacity=".7"/><rect x="149.6" y="170.4" width="1" height="4.1" fill="#f4d8b8" opacity=".7"/><rect x="158.0" y="165.7" width="1" height="5.9" fill="#6e5858" opacity=".7"/><rect x="142.0" y="191.7" width="1" height="2.5" fill="#f4d8b8" opacity=".7"/><rect x="180.3" y="166.8" width="1" height="4.2" fill="#6e5858" opacity=".7"/><rect x="240.3" y="186.6" width="1" height="3.6" fill="#8a6a6a" opacity=".7"/><rect x="123.5" y="168.4" width="1" height="3.7" fill="#6e5858" opacity=".7"/><rect x="137.0" y="167.9" width="1" height="3.7" fill="#f4d8b8" opacity=".7"/><rect x="241.5" y="168.5" width="1" height="5.1" fill="#f4d8b8" opacity=".7"/><rect x="9.3" y="169.2" width="1" height="2.0" fill="#e8b890" opacity=".7"/><rect x="84.1" y="174.6" width="1" height="4.5" fill="#f4d8b8" opacity=".7"/><rect x="130.4" y="180.7" width="1" height="5.4" fill="#e8b890" opacity=".7"/><rect x="187.3" y="183.9" width="1" height="5.5" fill="#f4d8b8" opacity=".7"/><rect x="98.1" y="176.2" width="1" height="4.1" fill="#8a6a6a" opacity=".7"/><rect x="140.5" y="188.3" width="1" height="4.1" fill="#8a6a6a" opacity=".7"/><rect x="138.2" y="188.0" width="1" height="4.4" fill="#8a6a6a" opacity=".7"/><rect x="60.7" y="185.0" width="1" height="5.2" fill="#8a6a6a" opacity=".7"/><rect x="82.4" y="173.5" width="1" height="5.7" fill="#8a6a6a" opacity=".7"/><rect x="203.1" y="170.3" width="1" height="2.4" fill="#8a6a6a" opacity=".7"/><rect x="34.6" y="167.4" width="1" height="3.6" fill="#6e5858" opacity=".7"/><rect x="217.2" y="176.4" width="1" height="5.2" fill="#8a6a6a" opacity=".7"/><rect x="52.4" y="182.0" width="1" height="5.2" fill="#f4d8b8" opacity=".7"/><rect x="52.4" y="183.4" width="1" height="5.6" fill="#e8b890" opacity=".7"/><rect x="30.1" y="178.7" width="1" height="5.0" fill="#8a6a6a" opacity=".7"/><rect x="209.5" y="178.0" width="1" height="2.1" fill="#6e5858" opacity=".7"/><rect x="38.3" y="170.0" width="1" height="2.8" fill="#8a6a6a" opacity=".7"/><rect x="258.5" y="190.0" width="1" height="2.4" fill="#f4d8b8" opacity=".7"/><rect x="35.1" y="183.4" width="1" height="2.3" fill="#f4d8b8" opacity=".7"/><rect x="85.3" y="177.6" width="1" height="4.1" fill="#6e5858" opacity=".7"/><rect x="54.8" y="175.1" width="1" height="4.5" fill="#f4d8b8" opacity=".7"/><rect x="220.4" y="169.9" width="1" height="3.8" fill="#e8b890" opacity=".7"/><rect x="105.8" y="170.3" width="1" height="2.7" fill="#f4d8b8" opacity=".7"/><rect x="84.5" y="167.3" width="1" height="5.4" fill="#6e5858" opacity=".7"/><rect x="148.7" y="170.2" width="1" height="4.3" fill="#e8b890" opacity=".7"/><rect x="210.1" y="172.0" width="1" height="5.6" fill="#8a6a6a" opacity=".7"/><rect x="212.6" y="176.0" width="1" height="5.6" fill="#e8b890" opacity=".7"/><rect x="200.3" y="185.7" width="1" height="3.6" fill="#8a6a6a" opacity=".7"/><rect x="18.4" y="174.2" width="1" height="3.9" fill="#f4d8b8" opacity=".7"/><rect x="231.8" y="191.7" width="1" height="5.6" fill="#f4d8b8" opacity=".7"/><rect x="60.6" y="190.5" width="1" height="4.7" fill="#e8b890" opacity=".7"/><rect x="56.4" y="176.0" width="1" height="2.7" fill="#f4d8b8" opacity=".7"/><rect x="101.7" y="192.0" width="1" height="4.6" fill="#f4d8b8" opacity=".7"/><rect x="198.8" y="191.5" width="1" height="2.1" fill="#f4d8b8" opacity=".7"/><rect x="192.8" y="171.9" width="1" height="3.6" fill="#f4d8b8" opacity=".7"/><rect x="198.7" y="182.5" width="1" height="2.0" fill="#e8b890" opacity=".7"/><rect x="65.5" y="189.5" width="1" height="4.2" fill="#6e5858" opacity=".7"/><rect x="252.4" y="180.3" width="1" height="6.0" fill="#6e5858" opacity=".7"/><rect x="211.3" y="167.1" width="1" height="4.4" fill="#f4d8b8" opacity=".7"/><rect x="100.9" y="190.3" width="1" height="3.5" fill="#8a6a6a" opacity=".7"/><rect x="223.3" y="179.6" width="1" height="4.4" fill="#6e5858" opacity=".7"/><rect x="246.7" y="176.4" width="1" height="4.1" fill="#e8b890" opacity=".7"/><rect x="95.4" y="172.7" width="1" height="4.6" fill="#e8b890" opacity=".7"/><rect x="173.2" y="185.2" width="1" height="2.1" fill="#8a6a6a" opacity=".7"/><rect x="152.9" y="182.1" width="1" height="3.6" fill="#6e5858" opacity=".7"/><rect x="13.8" y="173.5" width="1" height="3.6" fill="#e8b890" opacity=".7"/><rect x="19.2" y="189.4" width="1" height="3.7" fill="#6e5858" opacity=".7"/><rect x="65.5" y="185.4" width="1" height="2.2" fill="#f4d8b8" opacity=".7"/><rect x="244.6" y="184.5" width="1" height="3.9" fill="#8a6a6a" opacity=".7"/><rect x="157.5" y="168.1" width="1" height="4.5" fill="#6e5858" opacity=".7"/><rect x="30.8" y="188.3" width="1" height="3.4" fill="#8a6a6a" opacity=".7"/><rect x="32.4" y="177.0" width="1" height="4.7" fill="#6e5858" opacity=".7"/><rect x="156.9" y="182.3" width="1" height="4.7" fill="#e8b890" opacity=".7"/><rect x="203.0" y="179.3" width="1" height="6.0" fill="#e8b890" opacity=".7"/><rect x="191.6" y="171.4" width="1" height="2.5" fill="#e8b890" opacity=".7"/><rect x="204.7" y="181.9" width="1" height="3.4" fill="#e8b890" opacity=".7"/><rect x="159.2" y="184.6" width="1" height="4.8" fill="#8a6a6a" opacity=".7"/><rect x="165.2" y="185.3" width="1" height="2.8" fill="#8a6a6a" opacity=".7"/><rect x="131.1" y="182.6" width="1" height="2.8" fill="#f4d8b8" opacity=".7"/><rect x="164.0" y="165.3" width="1" height="3.0" fill="#f4d8b8" opacity=".7"/><rect x="162.7" y="167.8" width="1" height="4.2" fill="#f4d8b8" opacity=".7"/><rect x="197.3" y="189.6" width="1" height="2.6" fill="#8a6a6a" opacity=".7"/><rect x="164.7" y="175.1" width="1" height="3.9" fill="#8a6a6a" opacity=".7"/><rect x="88.3" y="178.3" width="1" height="2.5" fill="#f4d8b8" opacity=".7"/><rect x="209.4" y="177.1" width="1" height="5.3" fill="#8a6a6a" opacity=".7"/><rect x="116.0" y="185.2" width="1" height="3.6" fill="#8a6a6a" opacity=".7"/><rect x="96.3" y="182.6" width="1" height="6.0" fill="#e8b890" opacity=".7"/><rect x="75.9" y="185.5" width="1" height="5.3" fill="#8a6a6a" opacity=".7"/><rect x="111.6" y="175.0" width="1" height="2.4" fill="#e8b890" opacity=".7"/><rect x="20.5" y="167.2" width="1" height="4.3" fill="#6e5858" opacity=".7"/><rect x="212.8" y="177.5" width="1" height="5.3" fill="#f4d8b8" opacity=".7"/><rect x="19.9" y="170.8" width="1" height="4.6" fill="#f4d8b8" opacity=".7"/><rect x="181.4" y="178.4" width="1" height="5.1" fill="#e8b890" opacity=".7"/><rect x="73.8" y="168.9" width="1" height="3.4" fill="#e8b890" opacity=".7"/><rect x="95.6" y="168.2" width="1" height="4.8" fill="#e8b890" opacity=".7"/><rect x="114.3" y="186.7" width="1" height="3.2" fill="#e8b890" opacity=".7"/><rect x="57.7" y="191.1" width="1" height="4.9" fill="#8a6a6a" opacity=".7"/><rect x="22.0" y="187.4" width="1" height="2.1" fill="#6e5858" opacity=".7"/><rect x="152.6" y="186.5" width="1" height="5.0" fill="#e8b890" opacity=".7"/><rect x="208.0" y="179.6" width="1" height="5.3" fill="#8a6a6a" opacity=".7"/><rect x="46.1" y="185.5" width="1" height="5.5" fill="#e8b890" opacity=".7"/><rect x="211.9" y="171.0" width="1" height="2.2" fill="#8a6a6a" opacity=".7"/><rect x="148.1" y="191.1" width="1" height="4.6" fill="#6e5858" opacity=".7"/><rect x="16.7" y="179.8" width="1" height="5.2" fill="#f4d8b8" opacity=".7"/><rect x="87.3" y="172.4" width="1" height="2.4" fill="#e8b890" opacity=".7"/><rect x="22.1" y="182.1" width="1" height="2.6" fill="#6e5858" opacity=".7"/><rect x="64.1" y="171.0" width="1" height="5.1" fill="#e8b890" opacity=".7"/><rect x="199.6" y="175.6" width="1" height="3.4" fill="#e8b890" opacity=".7"/><rect x="175.5" y="178.3" width="1" height="4.1" fill="#f4d8b8" opacity=".7"/><rect x="184.8" y="189.7" width="1" height="3.6" fill="#e8b890" opacity=".7"/><rect x="222.8" y="186.8" width="1" height="5.3" fill="#6e5858" opacity=".7"/><rect x="250.0" y="182.3" width="1" height="4.1" fill="#f4d8b8" opacity=".7"/><rect x="209.4" y="176.4" width="1" height="3.7" fill="#8a6a6a" opacity=".7"/><rect x="64.1" y="169.4" width="1" height="4.5" fill="#8a6a6a" opacity=".7"/><rect x="83.7" y="175.5" width="1" height="4.1" fill="#e8b890" opacity=".7"/><rect x="253.1" y="166.6" width="1" height="3.2" fill="#f4d8b8" opacity=".7"/><rect x="79.2" y="169.2" width="1" height="5.7" fill="#f4d8b8" opacity=".7"/><rect x="196.6" y="165.5" width="1" height="3.9" fill="#f4d8b8" opacity=".7"/><rect x="81.6" y="170.3" width="1" height="3.4" fill="#8a6a6a" opacity=".7"/><rect x="156.6" y="177.7" width="1" height="4.0" fill="#6e5858" opacity=".7"/><rect x="48.3" y="172.6" width="1" height="2.7" fill="#e8b890" opacity=".7"/><rect x="163.6" y="190.4" width="1" height="4.2" fill="#e8b890" opacity=".7"/><rect x="126.5" y="175.9" width="1" height="5.8" fill="#f4d8b8" opacity=".7"/><rect x="126.0" y="171.0" width="1" height="2.2" fill="#8a6a6a" opacity=".7"/><rect x="209.2" y="175.4" width="1" height="4.1" fill="#e8b890" opacity=".7"/><rect x="205.6" y="166.6" width="1" height="5.7" fill="#f4d8b8" opacity=".7"/><rect x="228.1" y="189.4" width="1" height="3.8" fill="#8a6a6a" opacity=".7"/><rect x="186.2" y="181.4" width="1" height="2.6" fill="#8a6a6a" opacity=".7"/><rect x="201.5" y="168.9" width="1" height="5.6" fill="#8a6a6a" opacity=".7"/><rect x="166.2" y="191.8" width="1" height="3.1" fill="#f4d8b8" opacity=".7"/><rect x="39.3" y="185.8" width="1" height="2.0" fill="#8a6a6a" opacity=".7"/><rect x="214.6" y="167.2" width="1" height="3.1" fill="#f4d8b8" opacity=".7"/><rect x="232.2" y="183.7" width="1" height="2.3" fill="#e8b890" opacity=".7"/><rect x="5.0" y="170.1" width="1" height="2.8" fill="#f4d8b8" opacity=".7"/><rect x="204.0" y="176.9" width="1" height="2.1" fill="#6e5858" opacity=".7"/><rect x="137.2" y="169.3" width="1" height="5.3" fill="#e8b890" opacity=".7"/><rect x="82.5" y="175.9" width="1" height="4.2" fill="#6e5858" opacity=".7"/><rect x="174.1" y="166.8" width="1" height="2.3" fill="#8a6a6a" opacity=".7"/></g>
<rect x="0" y="194" width="261" height="67" fill="url(#sea)"/>
<rect x="0" y="194" width="261" height="67" filter="url(#wd)"/><rect x="0" y="194" width="261" height="67" filter="url(#wv)"/>
</svg>
<div class="abs" style="left:674px;top:148.2px;width:264.5px;height:264.8px;border:2px solid #00c4df"></div>
<div class="abs" style="left:668.5px;top:142.7px;width:12.6px;height:12.6px;border-radius:50%;background:#fff;border:1.3px solid #6f7a84"></div>
<div class="abs" style="left:931.3000000000001px;top:142.7px;width:12.6px;height:12.6px;border-radius:50%;background:#fff;border:1.3px solid #6f7a84"></div>
<div class="abs" style="left:668.5px;top:405.9px;width:12.6px;height:12.6px;border-radius:50%;background:#fff;border:1.3px solid #6f7a84"></div>
<div class="abs" style="left:931.3000000000001px;top:405.9px;width:12.6px;height:12.6px;border-radius:50%;background:#fff;border:1.3px solid #6f7a84"></div>
<div class="abs" style="left:797.5px;top:145.0px;width:17px;height:8px;border-radius:4px;background:#fff;border:1.2px solid #6f7a84"></div>
<div class="abs" style="left:797.5px;top:408.2px;width:17px;height:8px;border-radius:4px;background:#fff;border:1.2px solid #6f7a84"></div>
<div class="abs" style="left:670.8px;top:272.0px;width:8px;height:17px;border-radius:4px;background:#fff;border:1.2px solid #6f7a84"></div>
<div class="abs" style="left:933.6px;top:272.0px;width:8px;height:17px;border-radius:4px;background:#fff;border:1.2px solid #6f7a84"></div>
<div class="abs" style="left:805.6px;top:416px;width:1.4px;height:15px;background:#cfd4d9"></div>
<div class="abs" style="left:795.3px;top:430.8px;width:22px;height:22px;border-radius:50%;background:#fff;border:1px solid #dde2e6"></div>
<svg class="abs" style="left:798px;top:434.6px" width="16" height="16" viewBox="0 0 16 16" fill="none" stroke="#1d1f24" stroke-width="1.3" stroke-linecap="round" stroke-linejoin="round">
<path d="M2.8 7.3 A5.5 5.5 0 0 1 11 2.5"/><path d="M13.8 7.3 A5.5 5.5 0 0 1 5.6 12.1"/><path d="M12.7 3.5 L10.1 4.1 L11.9 0.9Z M3.9 11.1 L6.5 10.5 L4.7 13.7Z" fill="#1d1f24" stroke-width=".6"/></svg>
<div class="abs" style="left:736px;top:108.5px;width:141px;height:31px;border-radius:7px;background:#fff;box-shadow:0 1px 5px rgba(0,0,0,.12)"></div>
<svg class="abs" style="left:746.8px;top:114px" width="124" height="22" viewBox="0 0 124 22" fill="none" stroke="#1d1f24" stroke-width="1.9" stroke-linecap="round" stroke-linejoin="round">
<path d="M4.3 5.6 H13.8 Q16 5.6 16 7.8 V17.8"/><path d="M7.1 3.4 V12.7 Q7.1 14.9 9.3 14.9 H18.6"/><path d="M9.4 12.9 L13.9 8.4" stroke-width=".7" stroke="#888" stroke-dasharray="1 .8"/>
<rect x="37.4" y="4.1" width="4.8" height="4.8" rx="1.2"/><rect x="45.2" y="11.8" width="4.8" height="4.8" rx="1.2"/><path d="M45.2 4.7 Q48.6 4.7 48.6 8"/><path d="M47.1 6.9 L48.6 8.5 L50.1 6.9" stroke-width="1.4"/><path d="M41.9 16.2 Q38.7 16.2 38.7 13"/><path d="M37.2 14.1 L38.7 12.5 L40.2 14.1" stroke-width="1.4"/>
<rect x="69.8" y="7.2" width="9.4" height="9.4" rx="2.2"/><path d="M74.5 10.4 V13.6 M72.9 12 H76.1" stroke-width="1.5"/><path d="M72.8 4.7 H79.4 Q83.3 4.7 83.3 8.6 V15.1"/>
</svg>
<div class="abs" style="left:848.1px;top:122.8px;width:2.8px;height:2.8px;border-radius:50%;background:#1d1f24"></div>
<div class="abs" style="left:853.1px;top:122.8px;width:2.8px;height:2.8px;border-radius:50%;background:#1d1f24"></div>
<div class="abs" style="left:858.1px;top:122.8px;width:2.8px;height:2.8px;border-radius:50%;background:#1d1f24"></div>
<div class="abs" style="left:321px;top:557px;width:959px;height:42px;background:#fff"></div>
<div class="abs" style="left:977px;top:54px;width:240px;height:496px;background:#fff;border-radius:14px;box-shadow:0 0 28px rgba(0,0,0,.07)"></div>
<div class="abs" style="left:988.3px;top:59.2px;width:95.8px;height:35px;border:3.5px solid #ea4343;border-radius:6px"></div>
<svg class="abs" style="left:994px;top:68px" width="14" height="16" viewBox="0 0 14 16"><path d="M9.5 3.5 L5 8 L9.5 12.5" fill="none" stroke="#1b1d22" stroke-width="2" stroke-linecap="round" stroke-linejoin="round"/></svg>
<div class="t" style="left:1013px;top:69px;font-size:14px;line-height:14px;color:#1b1d22;font-weight:bold;">Filters</div>
<svg class="abs" style="left:1162px;top:67px" width="18" height="18" viewBox="0 0 18 18" fill="none" stroke="#c5cad0" stroke-width="1.3" stroke-linecap="round" stroke-linejoin="round">
<path d="M4.5 6.5 A5.2 5.2 0 1 1 3.8 9.5"/><path d="M3.5 3.8 V7 H6.7"/></svg>
<svg class="abs" style="left:1186px;top:67px" width="18" height="18" viewBox="0 0 18 18" fill="none" stroke="#5d6168" stroke-width="1.4" stroke-linecap="round">
<path d="M3.5 3.5 L14.5 14.5 M14.5 3.5 L3.5 14.5"/></svg>
<div class="abs" style="left:990px;top:97px;width:214px;height:1px;background:#eef0f2"></div>
<div class="abs" style="left:1211px;top:100px;width:5px;height:218px;border-radius:3px;background:#e3e6ea"></div>
<div class="t" style="left:991px;top:114px;font-size:13px;line-height:13px;color:#1b1d22;font-weight:normal;-webkit-text-stroke:0.25px #1b1d22">Quality</div>
<div class="ft" style="left:991px;top:139px"><svg width="66" height="66" viewBox="0 0 66 66"><defs><linearGradient id="nw" x1="0" y1="0" x2="1" y2="0"><stop offset="0" stop-color="#ecdccb"/><stop offset=".45" stop-color="#e4d6c8"/><stop offset=".6" stop-color="#cdc8c6"/><stop offset=".85" stop-color="#bfbcbc"/></linearGradient></defs>
<rect width="66" height="66" fill="url(#nw)"/><rect x="56" y="0" width="10" height="66" fill="#ddcdbc"/>
<rect x="13" y="26" width="20" height="31" fill="#eadcc6" stroke="#e2cfb2" stroke-width="1"/><rect x="17" y="30" width="13" height="23" fill="#bdbab4"/>
<path d="M9 59 L14 56 L52 56 L54 59 L54 66 L9 66Z" fill="#f4f0ea"/><path d="M33 48 Q33 44 36 44 Q39 44 39 48 L40 56 Q36 60 32 56Z" fill="#8faaa4"/><path d="M36 44 L36 34 M36 42 L41 32" stroke="#4a7a3a" stroke-width="1"/><circle cx="35" cy="35" r="1.8" fill="#d8402a"/><circle cx="41.5" cy="32" r="1.8" fill="#f0a060"/></svg></div>
<div class="ft" style="left:1064px;top:139px"><svg width="66" height="66" viewBox="0 0 66 66"><defs><linearGradient id="dsa" x1="0" y1="0" x2="0" y2="1"><stop offset="0" stop-color="#eeeff2"/><stop offset="1" stop-color="#e6e4e2"/></linearGradient><linearGradient id="dda" x1="0" y1="0" x2="0" y2="1"><stop offset="0" stop-color="#f1e5cf"/><stop offset="1" stop-color="#e8d6b8"/></linearGradient></defs>
<rect width="66" height="40" fill="url(#dsa)"/><rect y="39" width="66" height="27" fill="url(#dda)"/><path d="M13 42 L13.5 31" stroke="#8a6a3a" stroke-width="1.6"/><path d="M8 33 Q13 28 19 33 M9 30 Q13 27 18 29 M13 30 L11 35 M13 30 L16 35" stroke="#5a6a2a" stroke-width="1.8" fill="none"/><path d="M24 42 L24.5 31" stroke="#8a6a3a" stroke-width="1.6"/><path d="M19 33 Q24 28 30 33 M20 30 Q24 27 29 29 M24 30 L22 35 M24 30 L27 35" stroke="#5a6a2a" stroke-width="1.8" fill="none"/>
<rect x="34" y="38" width="6" height="4" fill="#e8dccb"/><rect x="49" y="36" width="10" height="6" fill="#e0cdb5"/><rect x="60" y="37" width="6" height="5" fill="#cbb49a"/>
<ellipse cx="20" cy="43" rx="12" ry="1.5" fill="#c8ad85" opacity=".6"/></svg></div>
<div class="ft" style="left:1137.5px;top:139px"><svg width="66" height="66" viewBox="0 0 66 66"><defs><linearGradient id="dsb" x1="0" y1="0" x2="0" y2="1"><stop offset="0" stop-color="#d8dee2"/><stop offset="1" stop-color="#dad8d2"/></linearGradient><linearGradient id="ddb" x1="0" y1="0" x2="0" y2="1"><stop offset="0" stop-color="#e6d5b8"/><stop offset="1" stop-color="#dcc6a4"/></linearGradient></defs>
<rect width="66" height="40" fill="url(#dsb)"/><rect y="39" width="66" height="27" fill="url(#ddb)"/><path d="M13 42 L13.5 31" stroke="#8a6a3a" stroke-width="1.6"/><path d="M8 33 Q13 28 19 33 M9 30 Q13 27 18 29 M13 30 L11 35 M13 30 L16 35" stroke="#5a6a2a" stroke-width="1.8" fill="none"/><path d="M24 42 L24.5 31" stroke="#8a6a3a" stroke-width="1.6"/><path d="M19 33 Q24 28 30 33 M20 30 Q24 27 29 29 M24 30 L22 35 M24 30 L27 35" stroke="#5a6a2a" stroke-width="1.8" fill="none"/>
<rect x="34" y="38" width="6" height="4" fill="#e8dccb"/><rect x="49" y="36" width="10" height="6" fill="#e0cdb5"/><rect x="60" y="37" width="6" height="5" fill="#cbb49a"/>
<ellipse cx="20" cy="43" rx="12" ry="1.5" fill="#c8ad85" opacity=".6"/></svg></div>
<div class="ft" style="left:991px;top:229.5px"><svg width="66" height="66" viewBox="0 0 66 66"><defs><linearGradient id="dsc" x1="0" y1="0" x2="0" y2="1"><stop offset="0" stop-color="#b8d0d4"/><stop offset="1" stop-color="#c8d8d8"/></linearGradient><linearGradient id="ddc" x1="0" y1="0" x2="0" y2="1"><stop offset="0" stop-color="#e6d8b8"/><stop offset="1" stop-color="#d8c49c"/></linearGradient></defs>
<rect width="66" height="40" fill="url(#dsc)"/><rect y="39" width="66" height="27" fill="url(#ddc)"/><path d="M13 42 L13.5 31" stroke="#8a6a3a" stroke-width="1.6"/><path d="M8 33 Q13 28 19 33 M9 30 Q13 27 18 29 M13 30 L11 35 M13 30 L16 35" stroke="#5a6a2a" stroke-width="1.8" fill="none"/><path d="M24 42 L24.5 31" stroke="#8a6a3a" stroke-width="1.6"/><path d="M19 33 Q24 28 30 33 M20 30 Q24 27 29 29 M24 30 L22 35 M24 30 L27 35" stroke="#5a6a2a" stroke-width="1.8" fill="none"/>
<rect x="34" y="38" width="6" height="4" fill="#e8dccb"/><rect x="49" y="36" width="10" height="6" fill="#e0cdb5"/><rect x="60" y="37" width="6" height="5" fill="#cbb49a"/>
<ellipse cx="20" cy="43" rx="12" ry="1.5" fill="#c8ad85" opacity=".6"/></svg></div>
<div class="ft" style="left:1064px;top:229.5px"><svg width="66" height="66" viewBox="0 0 66 66"><rect width="66" height="66" fill="#9a9a9c"/><rect width="66" height="66" fill="#a8a8aa" opacity=".5"/>
<path d="M22 66 Q20 48 30 38 Q36 32 44 38 Q52 46 52 66Z" fill="#f2f0ec"/><ellipse cx="32" cy="18" rx="7" ry="9" fill="#e8d8cc"/><path d="M24 12 Q30 0 42 6 Q44 10 38 12 Q30 10 26 18Z" fill="#1a1a1a"/><circle cx="40" cy="8" r="4" fill="#1a1a1a"/>
<path d="M28 27 L32 38" stroke="#e0cfc2" stroke-width="4"/><path d="M26 46 Q30 40 34 46 Q32 52 28 52Z" fill="#e8d4c6"/></svg></div>
<div class="t" style="left:984.0px;width:80px;text-align:center;top:210px;font-size:11px;line-height:11px;color:#7b7f87;font-weight:normal;">Natural</div>
<div class="t" style="left:1057.0px;width:80px;text-align:center;top:210px;font-size:11px;line-height:11px;color:#7b7f87;font-weight:normal;">Apricot</div>
<div class="t" style="left:1130.5px;width:80px;text-align:center;top:210px;font-size:11px;line-height:11px;color:#7b7f87;font-weight:normal;">Walnut</div>
<div class="t" style="left:984.0px;width:80px;text-align:center;top:300px;font-size:11px;line-height:11px;color:#7b7f87;font-weight:normal;">Coconut</div>
<div class="t" style="left:1057.0px;width:80px;text-align:center;top:300px;font-size:11px;line-height:11px;color:#7b7f87;font-weight:normal;">Light Skin</div>
<div class="abs" style="left:990px;top:328px;width:214px;height:1px;background:#eef0f2"></div>
<div class="t" style="left:991px;top:344px;font-size:13px;line-height:13px;color:#1b1d22;font-weight:normal;-webkit-text-stroke:0.25px #1b1d22">Delicacy</div>
<div class="ft" style="left:991px;top:368px"><svg width="66" height="66" viewBox="0 0 66 66"><rect width="66" height="66" fill="#f0eeec"/><path d="M0 40 Q33 24 66 40 V66 H0Z" fill="#5e8a3e"/>
<ellipse cx="35" cy="42" rx="22" ry="14" fill="#fff"/><ellipse cx="35" cy="42" rx="18" ry="11" fill="#f6f4f0" stroke="#e0dcd4" stroke-width=".6"/><ellipse cx="36" cy="34" rx="9" ry="6" fill="#f2b830"/><ellipse cx="36" cy="31" rx="7" ry="3.5" fill="#f8d860"/><circle cx="22" cy="46" r="2" fill="#3a4a2a"/></svg></div>
<div class="ft" style="left:1064px;top:368px"><svg width="66" height="66" viewBox="0 0 66 66"><rect width="66" height="66" fill="#dccfc4"/><path d="M0 46 Q33 40 66 46 V66 H0Z" fill="#e4dcd4"/>
<path d="M14 52 H52 L54 56 H12Z" fill="#f4eee6"/><path d="M18 28 Q33 20 48 28 V50 Q33 54 18 50Z" fill="#f2c050"/><path d="M18 28 Q33 20 48 28 V36 Q44 40 42 34 Q38 42 34 35 Q28 42 24 34 Q20 38 18 34Z" fill="#f6f2ea"/><ellipse cx="33" cy="26" rx="15" ry="5" fill="#faf6ee"/>
<circle cx="30" cy="21" r="2" fill="#e86a28"/><circle cx="35" cy="20" r="2" fill="#f08a30"/><path d="M32 19 L37 16 M31 19 L28 16" stroke="#3a7a3a" stroke-width="1.2"/></svg></div>
<div class="ft" style="left:1137.5px;top:368px"><svg width="66" height="66" viewBox="0 0 66 66"><rect width="66" height="66" fill="#ead8c4"/><path d="M0 46 Q33 40 66 46 V66 H0Z" fill="#f0e4d6"/>
<path d="M14 52 H52 L54 56 H12Z" fill="#f4eee6"/><path d="M18 28 Q33 20 48 28 V50 Q33 54 18 50Z" fill="#f2c050"/><path d="M18 28 Q33 20 48 28 V36 Q44 40 42 34 Q38 42 34 35 Q28 42 24 34 Q20 38 18 34Z" fill="#f6f2ea"/><ellipse cx="33" cy="26" rx="15" ry="5" fill="#faf6ee"/>
<circle cx="30" cy="21" r="2" fill="#e86a28"/><circle cx="35" cy="20" r="2" fill="#f08a30"/><path d="M32 19 L37 16 M31 19 L28 16" stroke="#3a7a3a" stroke-width="1.2"/></svg></div>
<div class="t" style="left:984.0px;width:80px;text-align:center;top:439px;font-size:11px;line-height:11px;color:#7b7f87;font-weight:normal;">Snack</div>
<div class="t" style="left:1057.0px;width:80px;text-align:center;top:439px;font-size:11px;line-height:11px;color:#7b7f87;font-weight:normal;">Dark Brown</div>
<div class="t" style="left:1130.5px;width:80px;text-align:center;top:439px;font-size:11px;line-height:11px;color:#7b7f87;font-weight:normal;">Miso</div>
<div class="abs" style="left:990px;top:465.5px;width:214px;height:1px;background:#eef0f2"></div>
<div class="t" style="left:991px;top:482px;font-size:13px;line-height:13px;color:#1b1d22;font-weight:normal;-webkit-text-stroke:0.25px #1b1d22">Retro</div>
<div class="abs" style="left:991px;top:506px;width:66px;height:43.5px;border-radius:6px 6px 0 0;overflow:hidden"><svg width="66" height="66" viewBox="0 0 66 66"><rect width="66" height="66" fill="#c4c6d4"/><rect x="0" y="0" width="20" height="66" fill="#d0d2de"/>
<path d="M18 36 Q12 10 22 4 Q33 -2 44 4 Q56 12 50 34 L46 40 L44 26 Q40 16 33 14 Q24 16 22 26 L21 40Z" fill="#141418"/><path d="M23 24 Q24 12 34 12 Q43 13 43 25 Q43 36 33 41 Q23 36 23 24Z" fill="#f2dcd0"/><path d="M22 24 Q28 10 44 24 Q40 14 33 12 Q25 13 22 24Z" fill="#141418"/>
<rect x="30" y="33" width="6.5" height="2.2" rx="1" fill="#d8503a"/><path d="M26 24 h4 M37 24 h4" stroke="#333" stroke-width="1"/><path d="M8 44 Q20 38 30 44 L30 66 H8Z" fill="#e8c8bc"/></svg></div>
<div class="abs" style="left:1064px;top:506px;width:66px;height:43.5px;border-radius:6px 6px 0 0;overflow:hidden"><svg width="66" height="66" viewBox="0 0 66 66"><rect width="66" height="66" fill="#8c7060"/>
<path d="M18 20 Q20 8 34 8 Q48 8 48 22 L52 44 H14Z" fill="#5a3e30"/><path d="M22 22 Q23 12 33 12 Q43 12 44 23 Q44 34 33 40 Q22 34 22 22Z" fill="#f2d2be"/><path d="M18 12 Q33 -4 54 10 L50 18 Q33 10 20 18Z" fill="#e88a3a"/><path d="M20 10 L50 13 M24 6 L30 16 M38 4 L42 16" stroke="#3a6ab0" stroke-width="2.5"/>
<rect x="29" y="31" width="7" height="2.4" rx="1" fill="#d8503a"/><path d="M26 22 h4 M36 22 h4" stroke="#333" stroke-width="1"/><path d="M20 28 Q18 38 26 42 L28 34Z" fill="#f0ccb4"/><path d="M12 44 Q33 36 54 44 V66 H12Z" fill="#3a5aa8"/></svg></div>
<div class="abs" style="left:1224px;top:54px;width:50px;height:205px;background:#fff;border-radius:10px;box-shadow:0 0 8px rgba(0,0,0,.06)"></div>
<div class="abs" style="left:1227.5px;top:57.5px;width:43px;height:46.5px;border-radius:8px;background:#dfe3e7"></div>
<svg class="abs" style="left:1240px;top:64px" width="18" height="18" viewBox="0 0 18 18" fill="none" stroke="#1b1d22" stroke-width="1.4" stroke-linejoin="round" stroke-linecap="round">
<path d="M4.8 3.5 L8.8 5.8 L12.8 3.5 L11.8 8 L15.4 10.8 L11.2 11.6 L8.8 15 L6.4 11.6 L2.3 10.8 L5.8 8Z"/><path d="M11.8 12.4 L14.5 16.4"/></svg>
<div class="t" style="left:1224.0px;width:50px;text-align:center;top:88px;font-size:9.3px;line-height:9.3px;color:#1b1d22;font-weight:normal;">Effects</div>
<svg class="abs" style="left:1240px;top:115px" width="18" height="18" viewBox="0 0 18 18" fill="none" stroke="#50545c" stroke-width="1.4" stroke-linecap="round">
<path d="M2.5 6 H8.3 M12.7 6 H15.5 M2.5 12 H4.3 M8.7 12 H15.5"/><circle cx="10.5" cy="6" r="2.2"/><circle cx="6.5" cy="12" r="2.2"/></svg>
<div class="t" style="left:1224.0px;width:50px;text-align:center;top:138px;font-size:9.3px;line-height:9.3px;color:#60646b;font-weight:normal;">Adjust</div>
<svg class="abs" style="left:1240px;top:165px" width="18" height="18" viewBox="0 0 18 18" fill="none" stroke="#50545c" stroke-width="1.4" stroke-linecap="round">
<rect x="2.5" y="2.5" width="13" height="13" rx="2.5" stroke-dasharray="2.6 2.4"/><rect x="6.5" y="6.5" width="5" height="5" rx="1"/></svg>
<div class="t" style="left:1224.0px;width:50px;text-align:center;top:188px;font-size:9.3px;line-height:9.3px;color:#60646b;font-weight:normal;">Arrange</div>
<svg class="abs" style="left:1240px;top:215px" width="18" height="18" viewBox="0 0 18 18" fill="none" stroke="#50545c" stroke-width="1.4" stroke-linejoin="round">
<path d="M9 2.5 Q14 8 14 11 A5 5 0 0 1 4 11 Q4 8 9 2.5Z"/><path d="M9 6 V15 A4 4 0 0 0 12.5 11.5 Q12 9 9 6Z" fill="#50545c" stroke="none"/></svg>
<div class="t" style="left:1224.0px;width:50px;text-align:center;top:239px;font-size:9.3px;line-height:9.3px;color:#60646b;font-weight:normal;">Opacity</div>
<svg class="abs" style="left:331px;top:569px" width="20" height="20" viewBox="0 0 20 20" fill="none" stroke="#1b1d22" stroke-width="1.5" stroke-linecap="round" stroke-linejoin="round">
<rect x="4.5" y="6.6" width="8.9" height="8.9" rx="2"/><path d="M7.2 3.4 H12.5 Q16.6 3.4 16.6 7.5 V12.2" stroke-width="1.6"/><path d="M8.95 9.3 V12.8 M7.2 11.05 H10.7" stroke-width="1.7"/></svg>
<svg class="abs" style="left:368px;top:569px" width="20" height="20" viewBox="0 0 20 20" fill="none" stroke="#cfd5db" stroke-width="1.5" stroke-linecap="round" stroke-linejoin="round">
<path d="M2.8 6.9 H16.8 M6.9 5 Q9.8 2.5 12.7 5 M4.6 7.4 L6.4 15.5 H13.6 L15.4 7.4"/></svg>
<div class="abs" style="left:399.5px;top:571px;width:1px;height:14px;background:#dfe3e7"></div>
<svg class="abs" style="left:413px;top:568px" width="22" height="22" viewBox="0 0 22 22" fill="none" stroke="#1b1d22" stroke-width="1.6" stroke-linecap="round" stroke-linejoin="round">
<path d="M11.5 16 H5.9 Q4.1 16 4.1 14.2 V5.2 Q4.1 3.4 5.9 3.4 H14.9 Q16.7 3.4 16.7 5.2 V12"/><path d="M15.8 13.4 V19 M13 16.2 H18.6" stroke-width="1.7"/></svg>
<div class="t" style="left:437px;top:572px;font-size:13px;line-height:13px;color:#1b1d22;font-weight:normal;-webkit-text-stroke:0.3px #1b1d22">Add page</div>
<svg class="abs" style="left:1140px;top:571px" width="14" height="14" viewBox="0 0 14 14" fill="none" stroke="#b8c0c8" stroke-width="1.2" stroke-linecap="round" stroke-linejoin="round"><path d="M9 2 L4 7 L9 12"/></svg>
<div class="t" style="left:1172.5px;top:573px;font-size:12px;line-height:12px;color:#1b1d22;font-weight:normal;letter-spacing:-0.6px;-webkit-text-stroke:0.3px #1b1d22">1/1</div>
<svg class="abs" style="left:1206px;top:571px" width="14" height="14" viewBox="0 0 14 14" fill="none" stroke="#b8c0c8" stroke-width="1.2" stroke-linecap="round" stroke-linejoin="round"><path d="M5 2 L10 7 L5 12"/></svg>
<div class="abs" style="left:1238px;top:571px;width:1px;height:14px;background:#dfe3e7"></div>
<svg class="abs" style="left:1250px;top:568px" width="20" height="20" viewBox="0 0 20 20" fill="none" stroke="#1b1d22" stroke-width="1.7" stroke-linecap="round" stroke-linejoin="round">
<rect x="3.5" y="9" width="13" height="7.5" rx="1.3"/><path d="M7.5 6.5 L10 4 L12.5 6.5"/></svg>
<div class="abs" style="left:319px;top:0;width:1px;height:599px;background:#000"></div>
<div class="abs" style="left:320px;top:0;width:1px;height:599px;background:#9a9a9c"></div>
<div class="abs" style="left:321px;top:0;width:1.3px;height:599px;background:#fff"></div>
<svg class="abs" style="left:319px;top:271px" width="12" height="56" viewBox="0 0 12 56"><path d="M0 0 Q1 2 4 4.5 Q8.5 8 8.5 13 V43 Q8.5 48 4 51.5 Q1 54 0 56Z" fill="#2e2e31"/><path d="M1.5 0.5 Q2 2 4.5 4 Q9 7.5 9 13 V43 Q9 48.5 4.5 52 Q2 54 1.5 55.5" fill="none" stroke="#fff" stroke-width="1.2"/></svg>
<svg class="abs" style="left:319px;top:292px" width="8" height="14" viewBox="0 0 8 14"><path d="M5.5 3 L2.5 7 L5.5 11" fill="none" stroke="#6a6a6e" stroke-width="1"/></svg>
</body></html>
